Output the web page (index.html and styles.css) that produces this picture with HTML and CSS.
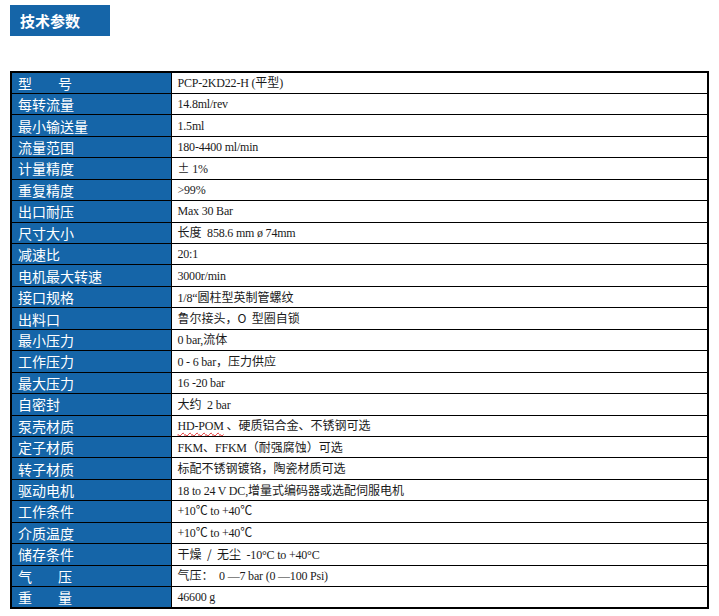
FILE: index.html
```html
<!DOCTYPE html>
<html lang="zh-CN">
<head>
<meta charset="utf-8">
<title>技术参数</title>
<link rel="stylesheet" href="styles.css">
</head>
<body>
<div class="title">技术参数</div>
<table class="spec">
<colgroup><col class="c1"><col class="c2"></colgroup>
<tbody>
<tr><th><span class="sp">型</span>号</th><td>PCP-2KD22-H (<span class="cn">平型</span>)</td></tr>
<tr><th>每转流量</th><td>14.8ml/rev</td></tr>
<tr><th>最小输送量</th><td>1.5ml</td></tr>
<tr><th>流量范围</th><td>180-4400 ml/min</td></tr>
<tr><th>计量精度</th><td><span class="cn">±</span> 1%</td></tr>
<tr><th>重复精度</th><td>&gt;99%</td></tr>
<tr><th>出口耐压</th><td>Max 30 Bar</td></tr>
<tr><th>尺寸大小</th><td><span class="cn">长度</span>&nbsp; 858.6 mm ø 74mm</td></tr>
<tr><th>减速比</th><td>20:1</td></tr>
<tr><th>电机最大转速</th><td>3000r/min</td></tr>
<tr><th>接口规格</th><td>1/8“<span class="cn">圆柱型英制管螺纹</span></td></tr>
<tr><th>出料口</th><td><span class="cn">鲁尔接头，O&nbsp; 型圈自锁</span></td></tr>
<tr><th>最小压力</th><td>0 bar,<span class="cn">流体</span></td></tr>
<tr><th>工作压力</th><td>0 - 6 bar<span class="cn">，压力供应</span></td></tr>
<tr><th>最大压力</th><td>16 -20 bar</td></tr>
<tr><th>自密封</th><td><span class="cn">大约</span>&nbsp; 2 bar</td></tr>
<tr><th>泵壳材质</th><td><span class="wavy">HD-POM</span> <span class="cn">、硬质铝合金、不锈钢可选</span></td></tr>
<tr><th>定子材质</th><td>FKM<span class="cn">、</span>FFKM<span class="cn">（耐强腐蚀）可选</span></td></tr>
<tr><th>转子材质</th><td><span class="cn">标配不锈钢镀铬，陶瓷材质可选</span></td></tr>
<tr><th>驱动电机</th><td>18 to 24 V DC,<span class="cn">增量式编码器或选配伺服电机</span></td></tr>
<tr><th>工作条件</th><td>+10℃ to +40℃</td></tr>
<tr><th>介质温度</th><td>+10℃ to +40℃</td></tr>
<tr><th>储存条件</th><td><span class="cn">干燥 &nbsp;/&nbsp; 无尘</span>&nbsp; -10°C to +40°C</td></tr>
<tr><th><span class="sp">气</span>压</th><td><span class="cn">气压：</span>&nbsp; 0 —7 bar (0 —100 Psi)</td></tr>
<tr><th><span class="sp">重</span>量</th><td>46600 g</td></tr>
</tbody>
</table>
</body>
</html>
```
FILE: styles.css
```css
html, body {
  margin: 0;
  padding: 0;
  background: #ffffff;
}

.title {
  margin: 5px 0 0 10px;
  width: 90px;
  height: 31px;
  padding-left: 10px;
  background: #1565a8;
  color: #ffffff;
  font-family: "Noto Sans CJK SC", sans-serif;
  font-weight: bold;
  font-size: 15px;
  line-height: 31px;
}

.spec {
  margin: 35px 0 0 10px;
  width: 699px;
  border-collapse: collapse;
  border: 2px solid #000;
  table-layout: fixed;
}

.c1 { width: 160px; }

.spec tr { height: 21.45px; }

.spec th,
.spec td {
  border: 1px solid #000;
  padding: 0 0 0 6px;
  text-align: left;
  vertical-align: middle;
  white-space: nowrap;
  overflow: hidden;
}

.spec th {
  background: #1565a8;
  color: #ffffff;
  font-family: "Noto Sans CJK SC", sans-serif;
  font-weight: normal;
  font-size: 14px;
  line-height: 18px;
}

.sp {
  display: inline-block;
  width: 40px;
}

.spec td {
  font-family: "Liberation Serif", "Noto Sans CJK SC", serif;
  font-size: 12px;
  line-height: 18px;
  color: #1a1a1a;
  letter-spacing: -0.2px;
}

.cn {
  font-family: "Noto Sans CJK SC", sans-serif;
  letter-spacing: 0;
}

.wavy {
  text-decoration: underline wavy #e02020;
  text-decoration-thickness: 1px;
  text-underline-offset: 2px;
}
```
